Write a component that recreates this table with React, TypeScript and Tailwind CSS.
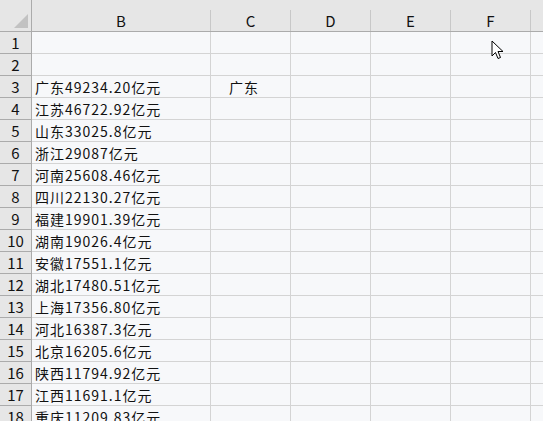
import React from "react";

const rows: [number, string, string][] = [
  [1, "", ""],
  [2, "", ""],
  [3, "广东49234.20亿元", "广东"],
  [4, "江苏46722.92亿元", ""],
  [5, "山东33025.8亿元", ""],
  [6, "浙江29087亿元", ""],
  [7, "河南25608.46亿元", ""],
  [8, "四川22130.27亿元", ""],
  [9, "福建19901.39亿元", ""],
  [10, "湖南19026.4亿元", ""],
  [11, "安徽17551.1亿元", ""],
  [12, "湖北17480.51亿元", ""],
  [13, "上海17356.80亿元", ""],
  [14, "河北16387.3亿元", ""],
  [15, "北京16205.6亿元", ""],
  [16, "陕西11794.92亿元", ""],
  [17, "江西11691.1亿元", ""],
  [18, "重庆11209.83亿元", ""],
];

const cols = ["B", "C", "D", "E", "F"];
const widths = ["w-[179px]", "w-[80px]", "w-[80px]", "w-[80px]", "w-[80px]"];

function Cursor() {
  return (
    <svg
      className="absolute left-[491px] top-[40px]"
      width="14"
      height="22"
      viewBox="0 0 14 22"
    >
      <path
        d="M1 1 L1 16 L4.5 12.5 L7 18.5 L9.5 17.5 L7 11.5 L12 11.5 Z"
        fill="#fff"
        stroke="#000"
        strokeWidth="1"
      />
    </svg>
  );
}

export default function App() {
  return (
    <div
      className="relative h-[421px] w-[543px] overflow-hidden bg-[#f7f8fa] text-[#111] text-[14px]"
      style={{ fontFamily: '"Noto Sans CJK SC", "Noto Sans", sans-serif' }}
    >
      {/* column headers */}
      <div className="flex h-[32px] border-b border-[#ababab] bg-[#e6e6e6]">
        <div className="relative w-[32px] shrink-0 border-r border-[#ababab]">
          <svg className="absolute left-[14px] top-[14px]" width="14" height="14">
            <polygon points="14,0 14,14 0,14" fill="#c2c2c2" />
          </svg>
        </div>
        {cols.map((c, i) => (
          <div key={c} className={`${widths[i]} flex shrink-0 flex-col`}>
            <div className="h-[10px]" />
            <div className="flex flex-1 items-center justify-center border-r border-[#c8c8c8] text-[15px] leading-none">
              {c}
            </div>
          </div>
        ))}
        <div className="flex-1" />
      </div>

      {rows.map(([n, b, c]) => (
        <div key={n} className="flex h-[22px]">
          <div className="flex w-[32px] shrink-0 items-center justify-center border-r border-b border-[#ababab] bg-[#e6e6e6] text-[15px] leading-none">
            {n}
          </div>
          <div className="flex w-[179px] shrink-0 items-center whitespace-nowrap border-r border-b border-[#d4d4d4] pl-[3px] leading-none tracking-[1px]">
            {b}
          </div>
          <div className="flex w-[80px] shrink-0 items-center border-r border-b border-[#d4d4d4] pl-[18px] leading-none tracking-[1px]">
            {c}
          </div>
          <div className="w-[80px] shrink-0 border-r border-b border-[#d4d4d4]" />
          <div className="w-[80px] shrink-0 border-r border-b border-[#d4d4d4]" />
          <div className="w-[80px] shrink-0 border-r border-b border-[#d4d4d4]" />
          <div className="flex-1 border-b border-[#d4d4d4]" />
        </div>
      ))}

      <Cursor />
    </div>
  );
}
